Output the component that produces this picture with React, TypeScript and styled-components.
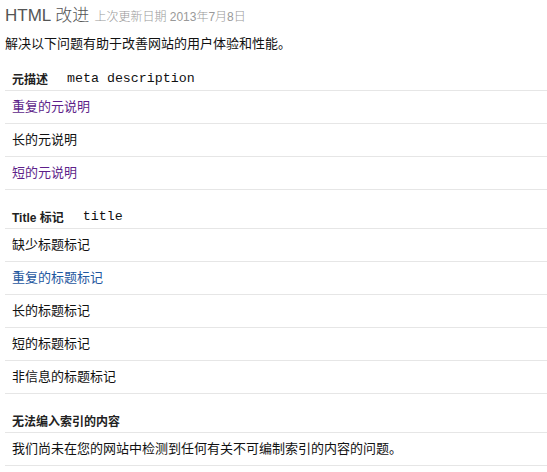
import React from "react";
import styled, { createGlobalStyle } from "styled-components";

const GlobalStyle = createGlobalStyle`
  html, body { margin: 0; padding: 0; background: #fff; }
  body {
    font-family: "Liberation Sans", Arial, "Noto Sans CJK SC", sans-serif;
    color: #222;
  }
`;

const Page = styled.div`
  width: 547px;
  height: 472px;
  box-sizing: border-box;
  padding-left: 5px;
  overflow: hidden;
`;

const Title = styled.h1`
  margin: 0;
  padding-top: 4px;
  line-height: 24px;
  font-size: 17px;
  font-weight: 300;
  color: #555;
  font-family: "Liberation Sans", Arial, "Noto Sans CJK SC", sans-serif;
  white-space: nowrap;
`;

const Updated = styled.span`
  font-size: 12px;
  color: #999;
  margin-left: 5px;
`;

const Intro = styled.p`
  margin: 6px 0 0;
  line-height: 17px;
  font-size: 13px;
  color: #111;
  font-family: "Liberation Sans", Arial, "Noto Sans CJK SC", sans-serif;
`;

const SectionHead = styled.div`
  display: flex;
  align-items: center;
  gap: 19px;
  padding: 17px 0 3px 7px;
  height: 18px;
  border-bottom: 1px solid #e6e6e6;
`;

const HeadLabel = styled.span`
  font-size: 12px;
  font-weight: bold;
  color: #222;
  font-family: "Liberation Sans", Arial, "Noto Sans CJK SC", sans-serif;
`;

const Code = styled.span`
  font-family: "Liberation Mono", "Courier New", monospace;
  font-size: 13.3px;
  color: #111;
`;

const Row = styled.div<{ $tone?: "visited" | "link" | "plain" }>`
  height: 32px;
  line-height: 32px;
  padding-left: 7px;
  border-bottom: 1px solid #e6e6e6;
  font-size: 13px;
  font-family: "Liberation Sans", Arial, "Noto Sans CJK SC", sans-serif;
  color: ${(p) =>
    p.$tone === "visited" ? "#5e1f8a" : p.$tone === "link" ? "#1f58a0" : "#111"};
  white-space: nowrap;
`;

type Item = { text: string; tone?: "visited" | "link" | "plain" };
type Section = { label: string; code?: string; items: Item[] };

const sections: Section[] = [
  {
    label: "元描述",
    code: "meta description",
    items: [
      { text: "重复的元说明", tone: "visited" },
      { text: "长的元说明" },
      { text: "短的元说明", tone: "visited" },
    ],
  },
  {
    label: "Title 标记",
    code: "title",
    items: [
      { text: "缺少标题标记" },
      { text: "重复的标题标记", tone: "link" },
      { text: "长的标题标记" },
      { text: "短的标题标记" },
      { text: "非信息的标题标记" },
    ],
  },
  {
    label: "无法编入索引的内容",
    items: [{ text: "我们尚未在您的网站中检测到任何有关不可编制索引的内容的问题。" }],
  },
];

export default function App() {
  return (
    <Page>
      <GlobalStyle />
      <Title>
        HTML 改进<Updated>上次更新日期 2013年7月8日</Updated>
      </Title>
      <Intro>解决以下问题有助于改善网站的用户体验和性能。</Intro>
      {sections.map((s) => (
        <section key={s.label}>
          <SectionHead>
            <HeadLabel>{s.label}</HeadLabel>
            {s.code && <Code>{s.code}</Code>}
          </SectionHead>
          {s.items.map((it) => (
            <Row key={it.text} $tone={it.tone}>
              {it.text}
            </Row>
          ))}
        </section>
      ))}
    </Page>
  );
}
